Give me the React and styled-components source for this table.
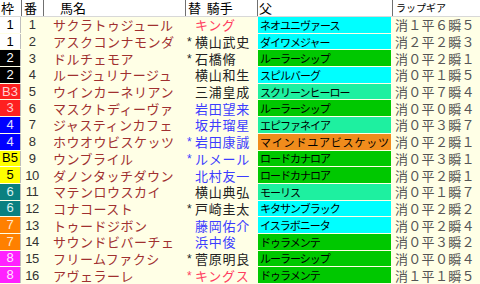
import React from "react";
import styled, { createGlobalStyle } from "styled-components";

const GlobalStyle = createGlobalStyle`
  html, body { margin: 0; padding: 0; background: #fff; }
  body { font-family: "Noto Sans CJK JP", "Liberation Sans", sans-serif; }
`;

const COLS = "21px 22px 142px 72px 135px 88px";

const FRAME = {
  1: { bg: "#ffffff", fg: "#000000" },
  2: { bg: "#000000", fg: "#ffffff" },
  3: { bg: "#ff2020", fg: "#ffd0d0" },
  4: { bg: "#0000ff", fg: "#e0e0ff" },
  5: { bg: "#ffff00", fg: "#000000" },
  6: { bg: "#0a8080", fg: "#d8f0f0" },
  7: { bg: "#ff8000", fg: "#ffe8d0" },
  8: { bg: "#ff20ff", fg: "#ffe0ff" },
};

const SIRE = {
  cyan: "#00ffff",
  green: "#00c800",
  mint: "#1ef0a0",
  orange: "#f08c1c",
};

const JOCKEY = {
  black: "#222222",
  blue: "#3c3cff",
  red: "#ff4060",
};

const rows = [
  { f: 1, fl: "1", n: 1, name: "サクラトゥジュール", mark: "", jockey: "キング", jc: "red", sire: "ネオユニヴァース", sc: "cyan", lap: "消１平６瞬５" },
  { f: 1, fl: "1", n: 2, name: "アスクコンナモンダ", mark: "*", jockey: "横山武史", jc: "black", sire: "ダイワメジャー", sc: "cyan", lap: "消２平２瞬３" },
  { f: 2, fl: "2", n: 3, name: "ドルチェモア", mark: "*", jockey: "石橋脩", jc: "black", sire: "ルーラーシップ", sc: "green", lap: "消０平２瞬１" },
  { f: 2, fl: "2", n: 4, name: "ルージュリナージュ", mark: "", jockey: "横山和生", jc: "black", sire: "スピルバーグ", sc: "cyan", lap: "消０平１瞬５" },
  { f: 3, fl: "B3", n: 5, name: "ウインカーネリアン", mark: "", jockey: "三浦皇成", jc: "black", sire: "スクリーンヒーロー", sc: "mint", lap: "消０平７瞬４" },
  { f: 3, fl: "3", n: 6, name: "マスクトディーヴァ", mark: "", jockey: "岩田望来", jc: "blue", sire: "ルーラーシップ", sc: "green", lap: "消０平０瞬４" },
  { f: 4, fl: "4", n: 7, name: "ジャスティンカフェ", mark: "", jockey: "坂井瑠星", jc: "blue", sire: "エピファネイア", sc: "mint", lap: "消０平３瞬７" },
  { f: 4, fl: "4", n: 8, name: "ホウオウビスケッツ", mark: "*", jockey: "岩田康誠", jc: "blue", sire: "マインドユアビスケッツ", sc: "orange", lap: "消０平２瞬１" },
  { f: 5, fl: "B5", n: 9, name: "ウンブライル", mark: "*", jockey: "ルメール", jc: "blue", sire: "ロードカナロア", sc: "green", lap: "消０平３瞬１" },
  { f: 5, fl: "5", n: 10, name: "ダノンタッチダウン", mark: "", jockey: "北村友一", jc: "blue", sire: "ロードカナロア", sc: "green", lap: "消０平２瞬１" },
  { f: 6, fl: "6", n: 11, name: "マテンロウスカイ", mark: "", jockey: "横山典弘", jc: "black", sire: "モーリス", sc: "mint", lap: "消０平１瞬７" },
  { f: 6, fl: "6", n: 12, name: "コナコースト", mark: "*", jockey: "戸崎圭太", jc: "black", sire: "キタサンブラック", sc: "cyan", lap: "消０平２瞬２" },
  { f: 7, fl: "7", n: 13, name: "トゥードジボン", mark: "", jockey: "藤岡佑介", jc: "blue", sire: "イスラボニータ", sc: "cyan", lap: "消０平２瞬４" },
  { f: 7, fl: "7", n: 14, name: "サウンドビバーチェ", mark: "", jockey: "浜中俊", jc: "blue", sire: "ドゥラメンテ", sc: "green", lap: "消０平３瞬２" },
  { f: 8, fl: "8", n: 15, name: "フリームファクシ", mark: "*", jockey: "菅原明良", jc: "black", sire: "ルーラーシップ", sc: "green", lap: "消０平０瞬４" },
  { f: 8, fl: "8", n: 16, name: "アヴェラーレ", mark: "*", jockey: "キングス", jc: "red", sire: "ドゥラメンテ", sc: "green", lap: "消１平１瞬５" },
];

const Sheet = styled.div`
  width: 480px;
  height: 284px;
  display: flex;
  flex-direction: column;
  background: #ffffe6;
`;

const HeaderRow = styled.div`
  height: 17px;
  flex: none;
  display: grid;
  grid-template-columns: ${COLS};
  background: #ffffff;
  border-bottom: 1px solid #d8d8d8;
  box-sizing: border-box;
`;

const HeadCell = styled.div`
  font-size: ${(p) => (p.$small ? "10px" : "13px")};
  color: #000;
  line-height: 14px;
  display: flex;
  align-items: center;
  padding-left: ${(p) => p.$pad || 1}px;
  white-space: nowrap;
  border-left: ${(p) => (p.$first ? "none" : "1px solid #707070")};
  box-shadow: ${(p) => (p.$first ? "none" : "inset 1px 0 0 #ffffff")};
`;

const Row = styled.div`
  flex: 1;
  display: grid;
  grid-template-columns: ${COLS};
  min-height: 0;
  line-height: 14px;
`;

const FrameCell = styled.div`
  background: ${(p) => p.$bg};
  color: ${(p) => p.$fg};
  font-family: "Liberation Sans", sans-serif;
  font-size: 13px;
  display: flex;
  align-items: center;
  justify-content: center;
  margin-bottom: 1px;
  border-right: 1px solid #bdbdbd;
`;

const NumCell = styled.div`
  font-family: "Liberation Sans", sans-serif;
  font-size: 13px;
  letter-spacing: -0.5px;
  color: #333;
  display: flex;
  align-items: center;
  justify-content: center;
`;

const NameCell = styled.div`
  font-size: 13px;
  letter-spacing: 0.5px;
  color: #a03030;
  display: flex;
  align-items: center;
  padding-left: 10px;
  white-space: nowrap;
`;

const JockeyCell = styled.div`
  font-size: 13px;
  letter-spacing: 0.75px;
  color: ${(p) => JOCKEY[p.$c]};
  display: flex;
  align-items: center;
  padding-left: 2px;
  white-space: nowrap;
`;

const Mark = styled.span`
  display: inline-block;
  width: 8px;
  font-family: "Liberation Sans", sans-serif;
  font-size: 12px;
  letter-spacing: 0;
`;

const SireCell = styled.div`
  display: flex;
  padding: 0 1px 1px 1px;
  min-height: 0;
`;

const SireBox = styled.div`
  flex: 1;
  background: ${(p) => SIRE[p.$c]};
  color: #000;
  font-size: 11px;
  line-height: 12px;
  letter-spacing: ${(p) => (p.$long ? "0.8px" : "-1px")};
  display: flex;
  align-items: center;
  padding-left: 2px;
  white-space: nowrap;
`;

const LapCell = styled.div`
  font-size: 13px;
  letter-spacing: 0.3px;
  color: #555;
  display: flex;
  align-items: center;
  padding-left: 3px;
  white-space: nowrap;
`;

export default function App() {
  return (
    <>
      <GlobalStyle />
      <Sheet>
        <HeaderRow>
          <HeadCell $first>枠</HeadCell>
          <HeadCell $pad={2}>番</HeadCell>
          <HeadCell $pad={16}>馬名</HeadCell>
          <HeadCell $pad={2}>替&nbsp;&nbsp;騎手</HeadCell>
          <HeadCell $pad={1}>父</HeadCell>
          <HeadCell $pad={3} $small>ラップギア</HeadCell>
        </HeaderRow>
        {rows.map((r) => (
          <Row key={r.n}>
            <FrameCell $bg={FRAME[r.f].bg} $fg={FRAME[r.f].fg}>{r.fl}</FrameCell>
            <NumCell>{r.n}</NumCell>
            <NameCell>{r.name}</NameCell>
            <JockeyCell $c={r.jc}>
              <Mark>{r.mark}</Mark>
              {r.jockey}
            </JockeyCell>
            <SireCell>
              <SireBox $c={r.sc} $long={r.sire.length > 10}>{r.sire}</SireBox>
            </SireCell>
            <LapCell>{r.lap}</LapCell>
          </Row>
        ))}
      </Sheet>
    </>
  );
}
